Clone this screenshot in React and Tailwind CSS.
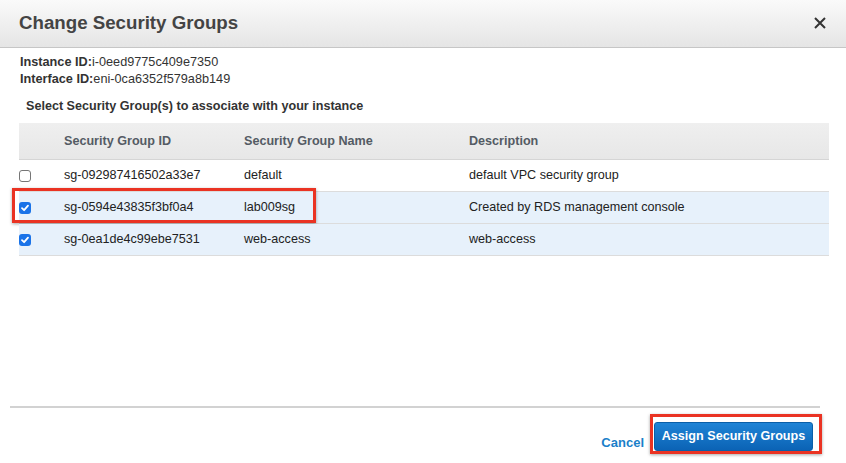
import React from "react";

const rows = [
  { id: "sg-092987416502a33e7", name: "default", desc: "default VPC security group", checked: false },
  { id: "sg-0594e43835f3bf0a4", name: "lab009sg", desc: "Created by RDS management console", checked: true, hl: true },
  { id: "sg-0ea1de4c99ebe7531", name: "web-access", desc: "web-access", checked: true },
];

function Check({ checked }) {
  if (!checked)
    return <div className="w-[12px] h-[12px] rounded-[3px] border border-[#767676] bg-white" />;
  return (
    <div className="w-[12px] h-[12px] rounded-[3px] bg-[#1a73e8] flex items-center justify-center">
      <svg width="10" height="10" viewBox="0 0 10 10">
        <path d="M2 5.2 L4.1 7.2 L8 2.6" stroke="white" strokeWidth="1.8" fill="none" strokeLinecap="round" strokeLinejoin="round" />
      </svg>
    </div>
  );
}

export default function App() {
  return (
    <div className="w-[846px] h-[463px] bg-white flex flex-col font-['Liberation_Sans',Arial,sans-serif] text-[#16191f] overflow-hidden">
      <div className="h-[48px] shrink-0 bg-gradient-to-b from-[#fafafa] to-[#e5e5e5] border-b border-[#c6c6c6] flex items-center justify-between pl-[19px] pr-[20px]">
        <div className="text-[18.7px] font-bold text-[#444] leading-none">Change Security Groups</div>
        <svg width="12" height="12" viewBox="0 0 12 12" className="mt-[-1px]">
          <path d="M1 1 L11 11 M11 1 L1 11" stroke="#333" strokeWidth="2" />
        </svg>
      </div>
      <div className="pl-[20px] pt-[6px] text-[12.7px] leading-[17px] text-[#333]">
        <div><span className="font-bold">Instance ID:</span>i-0eed9775c409e7350</div>
        <div><span className="font-bold">Interface ID:</span>eni-0ca6352f579a8b149</div>
      </div>
      <div className="pl-[26px] pt-[10px] text-[12.6px] font-bold text-[#333] leading-[17px]">
        Select Security Group(s) to associate with your instance
      </div>
      <div className="ml-[19px] mt-[8px] w-[810px] text-[12.6px]">
        <div className="h-[37px] grid grid-cols-[45px_180px_225px_1fr] items-center bg-gradient-to-b from-[#efefef] to-[#e7e7e7] border-b border-[#d5d5d5] font-bold text-[#545b64]">
          <div />
          <div>Security Group ID</div>
          <div>Security Group Name</div>
          <div>Description</div>
        </div>
        {rows.map((r) => (
          <div
            key={r.id}
            className={`relative h-[32px] grid grid-cols-[45px_180px_225px_1fr] items-center border-b border-[#dcdcdc] text-[#222] ${r.checked ? "bg-[#e7f1fb]" : "bg-white"}`}
          >
            <div className="flex items-center"><Check checked={r.checked} /></div>
            <div>{r.id}</div>
            <div>{r.name}</div>
            <div>{r.desc}</div>
            {r.hl && (
              <div className="absolute left-[-7px] top-[-4px] w-[304px] h-[35px] border-[3px] border-[#ea3323] shadow-[0_1px_3px_rgba(0,0,0,0.35)]" />
            )}
          </div>
        ))}
      </div>
      <div className="flex-1" />
      <div className="mx-[10px] w-[810px] border-t-2 border-[#d2d2d2]" />
      <div className="h-[55px] shrink-0 flex items-start justify-end pr-[33px]">
        <div className="text-[13px] font-bold text-[#1a7fc9] mt-[25px] mr-[10px]">Cancel</div>
        <div className="relative mt-[14px]">
          <div className="w-[159px] h-[29px] rounded-[3px] bg-gradient-to-b from-[#1f84d6] to-[#0b63b5] border border-[#0a5fa8] flex items-center justify-center text-white text-[12.6px] font-bold">
            Assign Security Groups
          </div>
          <div className="absolute left-[-4px] top-[-8px] w-[172px] h-[40px] border-[3px] border-[#ea3323] shadow-[0_1px_3px_rgba(0,0,0,0.35)]" />
        </div>
      </div>
    </div>
  );
}
